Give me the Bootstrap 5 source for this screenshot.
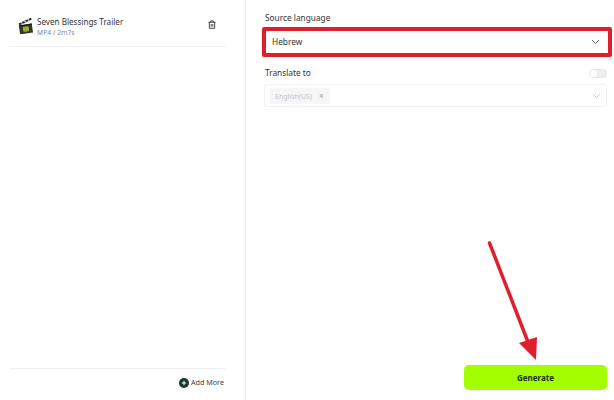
<!DOCTYPE html>
<html lang="en">
<head>
<meta charset="utf-8">
<title>Subtitle</title>
<link href="https://cdn.jsdelivr.net/npm/bootstrap@5.3.0/dist/css/bootstrap.min.css" rel="stylesheet">
<style>
html,body{height:400px;overflow:hidden;background:#fff;font-family:"Noto Sans","Open Sans",sans-serif;color:#222}
.shell{width:614px;height:400px}
.side{width:246px;height:400px;border-right:1px solid #f0f0f0;padding:0 19px 0 10px}
.file-row{height:47px;border-bottom:1px solid #efefef;padding:16px 10px 0 8px}
.file-name{font-size:8.1px;line-height:12px;color:#333}
.file-meta{font-size:6.8px;line-height:10px;color:#888}
.file-thumb{margin-right:4px;margin-top:1px}
.side-foot{height:32px;border-top:1px solid #efefef;padding-right:2px;padding-bottom:4px}
.add-text{font-size:7.2px;color:#444;margin-left:2px}
.main-col{width:368px;height:400px;padding:12px 7px 10px 17px;position:relative}
.lbl{font-size:8.3px;line-height:12px;color:#333;padding-left:2px}
.src-box{height:30px;border:4px solid #e01f2d;border-radius:2px;margin:3px -5px 0 -1px;padding:0 8px 0 6px;font-size:8.3px;color:#333}
.to-head{margin-top:10px}
.toggle-off{width:18px;height:9px;border-radius:5px;background:#eee;border:1px solid #e6e6e6}
.toggle-off::before{content:"";display:block;width:7px;height:7px;border-radius:50%;background:#fff}
.to-box{height:23px;margin:5px 0 0 1px;border:1px solid #f2f2f2;border-radius:2px;padding:0 5px 0 5px}
.chip{background:#f6f6f6;border-radius:2px;font-size:7px;color:#c4c4c4;padding:2px 6px 2px 5px;line-height:11px}
.chip-x{color:#999;font-size:8px;margin-left:7px}
.gen-wrap{flex-grow:1}
.gen-btn{width:143px;height:25px;background:#a3fe00;border-radius:5px;font-size:8px;font-weight:700;color:#16301c;border:0;padding:0}
.gen-btn:hover{background:#a3fe00;color:#16301c}
.pointer{position:absolute;left:238px;top:235px}
</style>
</head>
<body>
<div class="shell d-flex">
  <aside class="side d-flex flex-column">
    <div class="file-row d-flex align-items-start">
      <svg class="file-thumb flex-shrink-0" width="15" height="17" viewBox="0 0 15 17" aria-hidden="true">
        <g transform="rotate(-8 7.5 9)">
        <path d="M1 5.5 14 1.5l.6 2L1.6 7.6z" fill="#2d2d2d"/>
        <path d="M3.5 4.8 5 6.2M7 3.7 8.5 5.2M10.5 2.6 12 4.2" stroke="#e8e8e8" stroke-width="1"/>
        <rect x="1" y="7.5" width="13" height="9" fill="#2f3a22"/>
        <rect x="4.5" y="9.5" width="6" height="5" rx="1" fill="#9aa93a"/>
        <path d="M1 7.5h13v1.4H1z" fill="#1f1f1f"/>
        </g>
      </svg>
      <div class="flex-grow-1">
        <div class="file-name">Seven Blessings Trailer</div>
        <div class="file-meta">MP4 / 2m7s</div>
      </div>
      <svg class="mt-1" width="8" height="9" viewBox="0 0 9 10" fill="none" stroke="#333" stroke-width="1" aria-hidden="true">
        <path d="M.5 2.5h8M3 2.5V1h3v1.5M1.5 2.5v6.8h6V2.5M3.6 4.5v3M5.4 4.5v3"/>
      </svg>
    </div>
    <div class="flex-grow-1"></div>
    <div class="side-foot d-flex align-items-center justify-content-end">
      <svg width="10" height="10" viewBox="0 0 10 10" aria-hidden="true">
        <circle cx="5" cy="5" r="5" fill="#173a2a"/>
        <path d="M5 2.8v4.4M2.8 5h4.4" stroke="#fff" stroke-width="1"/>
      </svg>
      <span class="add-text">Add More</span>
    </div>
  </aside>
  <main class="main-col d-flex flex-column">
    <div class="lbl">Source language</div>
    <div class="src-box d-flex align-items-center justify-content-between">
      <span>Hebrew</span>
      <svg width="9" height="6" viewBox="0 0 9 6" fill="none" stroke="#666" stroke-width="1" aria-hidden="true"><path d="M1 1l3.5 3.5L8 1"/></svg>
    </div>
    <div class="to-head lbl d-flex align-items-center justify-content-between">
      <span>Translate to</span>
      <span class="toggle-off"></span>
    </div>
    <div class="to-box d-flex align-items-center justify-content-between">
      <span class="chip">English(US)<span class="chip-x">×</span></span>
      <svg width="9" height="6" viewBox="0 0 9 6" fill="none" stroke="#ccc" stroke-width="1" aria-hidden="true"><path d="M1 1l3.5 3.5L8 1"/></svg>
    </div>
    <div class="gen-wrap d-flex align-items-end justify-content-end">
      <button type="button" class="btn gen-btn">Generate</button>
    </div>
    <svg class="pointer" width="60" height="130" viewBox="0 0 60 130" aria-hidden="true">
      <path d="M5.5 8 44 107" stroke="#e01f2d" stroke-width="3.5" stroke-linecap="round" fill="none"/>
      <path d="M35 108 53 102 52 125z" fill="#e01f2d"/>
    </svg>
  </main>
</div>
<script src="https://cdn.jsdelivr.net/npm/bootstrap@5.3.0/dist/js/bootstrap.bundle.min.js"></script>
</body>
</html>
